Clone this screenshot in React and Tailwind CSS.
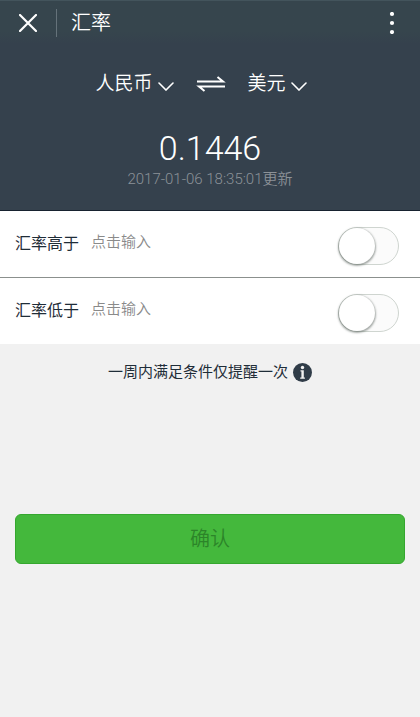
import React, { useState } from 'react'

const rows = [
  { id: 'above', label: '汇率高于' },
  { id: 'below', label: '汇率低于' },
]

// --- Icons -----------------------------------------------------------------
function CloseIcon() {
  return (
    <svg width="18" height="18" viewBox="0 0 18 18" fill="none" stroke="currentColor" strokeWidth="2.2" strokeLinecap="round">
      <path d="M1 1l16 16M17 1L1 17" />
    </svg>
  )
}

function MoreIcon() {
  return (
    <svg width="6" height="22" viewBox="0 0 6 22" fill="currentColor">
      <circle cx="3" cy="2" r="2.100" />
      <circle cx="3" cy="11" r="2.100" />
      <circle cx="3" cy="20" r="2.100" />
    </svg>
  )
}

function ChevronIcon() {
  return (
    <svg width="16" height="9" viewBox="0 0 16 9" fill="none" stroke="currentColor" strokeWidth="1.6" strokeLinecap="round" className="mt-1">
      <path d="M1 1l7 7 7-7" />
    </svg>
  )
}

function SwapIcon() {
  return (
    <svg width="30" height="18" viewBox="0 0 30 18" fill="none" stroke="currentColor" strokeWidth="2">
      <path d="M1 6.500h26L21.500 2M29 11.500H3l5.500 4.500" />
    </svg>
  )
}

function InfoIcon() {
  return (
    <svg width="19" height="19" viewBox="0 0 19 19">
      <circle cx="9.500" cy="9.500" r="9.500" fill="#303c48" />
      <circle cx="9.500" cy="4.500" r="1.700" fill="#f1f1f1" />
      <path d="M7.500 7.300h3.300v7.200h1.100v1.300H7.200v-1.300h1.200V8.500h-.9z" fill="#f1f1f1" />
    </svg>
  )
}

// --- Alert row -------------------------------------------------------------
function AlertRow({ id, label }) {
  const [enabled, setEnabled] = useState(false)

  return (
    <div className="box-content flex h-[66px] items-center bg-white">
      <label htmlFor={id} className="ml-[15px] shrink-0 text-base text-[#1f2d38]">{label}</label>
      <input
        id={id}
        type="text"
        inputMode="decimal"
        placeholder="点击输入"
        className="ml-3 min-w-0 flex-1 pb-1 text-[15px] font-[350] text-[#1f2d38] outline-none placeholder:text-[#8a8a8a]"
      />
      <label className="relative mt-1 mr-[21px] flex h-[38px] w-[61px] shrink-0 cursor-pointer rounded-full border border-[#cfd5d0] bg-[#fbfbfb] has-checked:bg-[#44b83c]">
        <input
          type="checkbox"
          role="switch"
          aria-label={label}
          checked={enabled}
          onChange={(e) => setEnabled(e.target.checked)}
          className="peer sr-only"
        />
        <span className="h-9 w-9 rounded-full bg-white shadow-[0_1px_2px_1px_rgba(60,70,65,0.45)] transition-transform peer-checked:translate-x-[23px]" />
      </label>
    </div>
  )
}

function App() {
  return (
    <div className="min-h-screen bg-[#f1f1f1] font-[Roboto,'Noto_Sans_CJK_SC',sans-serif]">
      <div className="border-b border-[#17222f] bg-[#35414d] font-[350] text-white">
        {/* Title bar */}
        <header className="flex h-11 items-center border-t border-[#43545c] bg-linear-to-b from-[#36454d] from-70% to-[#35414d] pr-[25px] pl-[19px]">
          <button type="button" aria-label="关闭"><CloseIcon /></button>
          <span className="ml-[19px] h-7 w-px bg-[#65727a]" />
          <h1 className="ml-[14px] text-xl font-[350]">汇率</h1>
          <button type="button" aria-label="更多" className="ml-auto"><MoreIcon /></button>
        </header>

        {/* Current rate */}
        <div className="flex flex-col items-center pb-5">
          <div className="flex h-20 items-center gap-[22px] pr-[18px] text-[19px]">
            <button type="button" className="flex items-center gap-[5px]">人民币<ChevronIcon /></button>
            <button type="button" aria-label="互换"><SwapIcon /></button>
            <button type="button" className="flex items-center gap-[5px]">美元<ChevronIcon /></button>
          </div>
          <p className="mt-1 text-[34px] leading-10">0.1446</p>
          <p className="text-[15px] leading-[22px] text-[#8c9298]">2017-01-06 18:35:01更新</p>
        </div>
      </div>

      <form onSubmit={(e) => e.preventDefault()}>
        <div className="divide-y divide-[#8b908d]">
          {rows.map((row) => (
            <AlertRow key={row.id} {...row} />
          ))}
        </div>

        <p className="mt-4 flex items-center justify-center gap-[5px] text-[15px] leading-6 text-[#1f2d38]">
          一周内满足条件仅提醒一次
          <InfoIcon />
        </p>

        <div className="mt-[130px] px-[15px]">
          <button type="submit" className="h-[50px] w-full rounded-md border border-[#35a72f] bg-[#44b83c] text-xl font-[350] text-[#2c8429]">
            确认
          </button>
        </div>
      </form>
    </div>
  )
}

export default App
